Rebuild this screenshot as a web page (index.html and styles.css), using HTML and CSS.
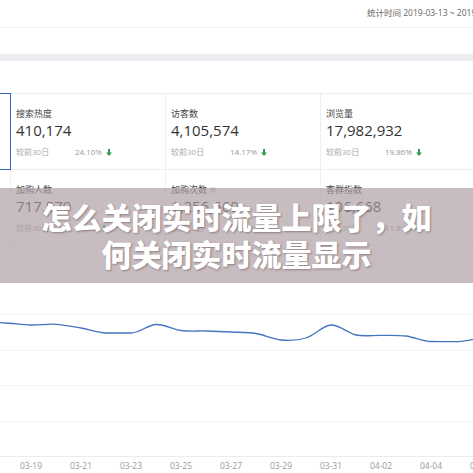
FILE: index.html
```html
<!DOCTYPE html>
<html lang="zh-CN">
<head>
<meta charset="utf-8">
<title>流量概况</title>
<link rel="stylesheet" href="styles.css">
</head>
<body>
<div class="page">
  <div class="topbar">
    <span class="range">统计时间 2019-03-13 ~ 2019-04-11</span>
  </div>
  <div class="spacer"></div>
  <div class="band"></div>
  <div class="spacer2"></div>

  <div class="cards">
    <div class="cell edge selected"></div>
    <div class="cell">
      <div class="label">搜索热度</div>
      <div class="value">410,174</div>
      <div class="sub"><span class="cmp">较前30日</span><span class="pct">24.10%</span><svg class="arrow" viewBox="0 0 6 7" width="6" height="7"><path d="M2 0h2v3.6h2L3 7 0 3.6h2z"/></svg></div>
    </div>
    <div class="cell">
      <div class="label">访客数</div>
      <div class="value">4,105,574</div>
      <div class="sub"><span class="cmp">较前30日</span><span class="pct">14.17%</span><svg class="arrow" viewBox="0 0 6 7" width="6" height="7"><path d="M2 0h2v3.6h2L3 7 0 3.6h2z"/></svg></div>
    </div>
    <div class="cell">
      <div class="label">浏览量</div>
      <div class="value">17,982,932</div>
      <div class="sub"><span class="cmp">较前30日</span><span class="pct">19.86%</span><svg class="arrow" viewBox="0 0 6 7" width="6" height="7"><path d="M2 0h2v3.6h2L3 7 0 3.6h2z"/></svg></div>
    </div>

    <div class="cell edge"></div>
    <div class="cell">
      <div class="label">加购人数</div>
      <div class="value">717,879</div>
      <div class="sub"><span class="cmp">较前30日</span><span class="pct">8.23%</span><svg class="arrow" viewBox="0 0 6 7" width="6" height="7"><path d="M2 0h2v3.6h2L3 7 0 3.6h2z"/></svg></div>
    </div>
    <div class="cell">
      <div class="label">加购次数 <span class="help"></span></div>
      <div class="value">1,256,660</div>
      <div class="sub"><span class="cmp">较前30日</span><span class="pct">10.47%</span><svg class="arrow" viewBox="0 0 6 7" width="6" height="7"><path d="M2 0h2v3.6h2L3 7 0 3.6h2z"/></svg></div>
    </div>
    <div class="cell">
      <div class="label">客群指数</div>
      <div class="value">106,668</div>
      <div class="sub"><span class="cmp">较前30日</span><span class="pct">11.89%</span><svg class="arrow" viewBox="0 0 6 7" width="6" height="7"><path d="M2 0h2v3.6h2L3 7 0 3.6h2z"/></svg></div>
    </div>
  </div>

  <svg class="chart" viewBox="0 245 473 228" width="473" height="228">
    <g class="grid">
      <line x1="0" y1="313.5" x2="473" y2="313.5"/>
      <line x1="0" y1="349.5" x2="473" y2="349.5"/>
      <line x1="0" y1="384.5" x2="473" y2="384.5"/>
      <line x1="0" y1="420.5" x2="473" y2="420.5"/>
      <line class="axis" x1="0" y1="455.5" x2="473" y2="455.5"/>
    </g>
    <path class="series" d="M-19 321 C-10.67 321,-2.33 321.5,6 322 C14.33 322.5,22.67 323.78,31 324 C39.33 324.22,47.67 322.8,56 323.3 C64.33 323.8,72.67 325.55,81 327 C89.33 328.45,97.67 332,106 332 C114.33 332,122.67 332,131 332 C139.33 332,147.67 323.92,156 323.5 C164.33 323.08,172.67 328.42,181 329.5 C189.33 330.58,197.67 329.75,206 330 C214.33 330.25,222.67 330.58,231 331 C239.33 331.42,247.67 331.17,256 332.5 C264.33 333.83,272.67 338.25,281 339 C289.33 339.75,297.67 339.5,306 337 C314.33 334.5,322.67 324.5,331 324 C339.33 323.5,347.67 332.28,356 334 C364.33 335.72,372.67 334.13,381 334.3 C389.33 334.47,397.67 333.97,406 335 C414.33 336.03,422.67 340.5,431 340.5 C439.33 340.5,447.67 340.7,456 340.7 C464.33 340.7,472.67 338,481 338"/>
    <g class="ticks">
      <text x="31" y="468">03-19</text>
      <text x="81" y="468">03-21</text>
      <text x="131" y="468">03-23</text>
      <text x="181" y="468">03-25</text>
      <text x="231" y="468">03-27</text>
      <text x="281" y="468">03-29</text>
      <text x="331" y="468">03-31</text>
      <text x="381" y="468">04-02</text>
      <text x="431" y="468">04-04</text>
      <text x="481" y="468">04-06</text>
    </g>
  </svg>

  <div class="overlay">
    <h1 class="title">怎么关闭实时流量上限了，如何关闭实时流量显示</h1>
  </div>
</div>
</body>
</html>
```
FILE: styles.css
```css
html, body {
  margin: 0;
  padding: 0;
  background: #fff;
}
body {
  font-family: "Open Sans", "Noto Sans CJK SC", sans-serif;
  color: #333;
}
.page {
  position: relative;
  width: 473px;
  height: 473px;
  overflow: hidden;
}
.topbar {
  height: 28px;
  border-bottom: 1px solid #f1f1f1;
  box-sizing: border-box;
  padding-top: 8px;
  padding-left: 367px;
  white-space: nowrap;
}
.range {
  font-size: 8.5px;
  line-height: 10px;
  color: #666;
  display: block;
}
.spacer {
  height: 26px;
}
.band {
  height: 7px;
  background: #eceef2;
}
.spacer2 {
  height: 32px;
}
.cards {
  display: grid;
  grid-template-columns: 11px 155px 155px 155px;
  grid-auto-rows: 76px;
  width: 476px;
  border-top: 1px solid #eeeeee;
}
.cell {
  box-sizing: border-box;
  border-right: 1px solid #eeeeee;
  border-bottom: 1px solid #eeeeee;
  padding: 14px 0 0 5px;
  white-space: nowrap;
}
.cell.edge {
  padding: 0;
}
.cell.selected {
  border: 1px solid #3567c2;
  border-left: none;
  margin-top: -1px;
  height: 77px;
}
.label {
  font-size: 9px;
  line-height: 12px;
  color: #444;
  display: flex;
  align-items: center;
  gap: 3px;
}
.help {
  display: inline-block;
  width: 6px;
  height: 6px;
  border-radius: 50%;
  background: #d6d6d6;
}
.value {
  font-size: 15px;
  line-height: 18px;
  color: #333;
  margin-top: 1px;
}
.sub {
  display: flex;
  align-items: center;
  margin-top: 8px;
  font-size: 8px;
  line-height: 10px;
  color: #aaa;
}
.cmp {
  width: 59px;
}
.pct {
  color: #999;
}
.arrow {
  margin-left: 4px;
  fill: #2f9a52;
}
.chart {
  display: block;
}
.grid line {
  stroke: #f3f3f3;
  stroke-width: 1;
}
.grid .axis {
  stroke: #ececec;
}
.series {
  fill: none;
  stroke: #4574c0;
  stroke-width: 1.3;
}
.ticks text {
  font-family: "Open Sans", sans-serif;
  font-size: 8.5px;
  fill: #999;
  text-anchor: middle;
}
.overlay {
  position: absolute;
  top: 188px;
  left: 0;
  right: 0;
  height: 95px;
  box-sizing: border-box;
  padding: 10px 40px 0;
  background: rgba(172, 156, 160, 0.68);
}
.title {
  margin: 0;
  font-family: "Noto Sans CJK SC", sans-serif;
  font-weight: 900;
  font-size: 30px;
  line-height: 37px;
  color: #fff;
  text-align: center;
  text-shadow: 1px 1px 2px rgba(60, 40, 45, 0.4);
}
```
